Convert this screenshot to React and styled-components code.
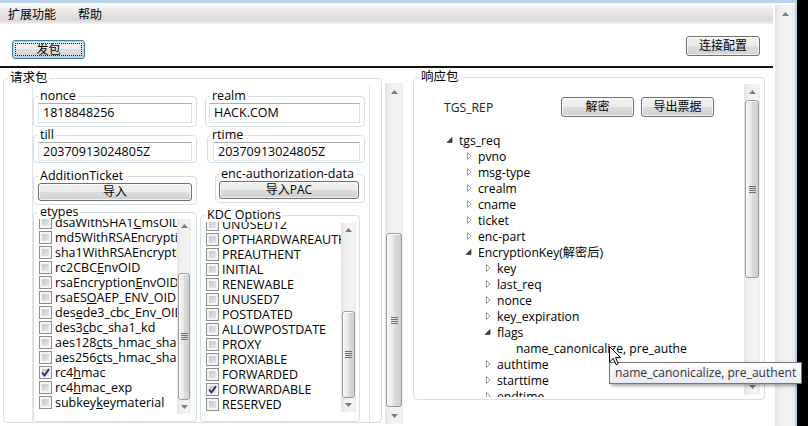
import React from "react";
import styled, { createGlobalStyle } from "styled-components";

const GlobalStyle = createGlobalStyle`
  * { box-sizing: border-box; }
  html, body { margin: 0; padding: 0; background: #000; }
  body {
    font-family: "Open Sans", "Noto Sans CJK SC", sans-serif;
    font-size: 12.5px;
    color: #000;
  }
`;

const Screen = styled.div`
  position: relative;
  width: 808px;
  height: 426px;
  overflow: hidden;
  background: #000;
`;

const Frame = styled.div`
  display: flex;
  width: 797px;
  height: 426px;
  border-top: 3px solid #b9d1ea;
  border-right: 2px solid #b9d1ea;
  background: #fff;
  overflow: hidden;
`;

const Main = styled.div`
  display: flex;
  flex-direction: column;
  flex: none;
  width: 773px;
`;

const MenuBar = styled.div`
  display: flex;
  align-items: center;
  gap: 22px;
  height: 18px;
  margin-top: 3px;
  padding-left: 8px;
  font-size: 12px;
  background: linear-gradient(#f6f6f6 0%, #eae8e8 25%, #dcd9d9 80%, #f4f4f4 100%);
`;

const MenuItem = styled.span`
  line-height: 18px;
`;

const Toolbar = styled.div`
  display: flex;
  justify-content: space-between;
  align-items: flex-start;
  height: 42px;
  padding: 0 13px 0 12px;
`;

const Button = styled.button`
  position: relative;
  flex: none;
  width: ${(p) => p.$w}px;
  height: ${(p) => p.$h}px;
  margin-top: ${(p) => p.$mt || 0}px;
  padding: 0;
  border: 1px solid ${(p) => (p.$focus ? "#3c7fb1" : "#707070")};
  border-radius: 3px;
  background: linear-gradient(#f2f2f2 0%, #ebebeb 50%, #dddddd 50%, #cfcfcf 100%);
  box-shadow: ${(p) =>
    p.$focus
      ? "inset 0 0 0 1px #9fdcf6"
      : "inset 0 0 0 1px rgba(255, 255, 255, 0.75)"};
  font: inherit;
  font-size: 12px;
  color: #000;
  line-height: 1;

  &::after {
    content: "";
    display: ${(p) => (p.$focus ? "block" : "none")};
    position: absolute;
    inset: 2px;
    border: 1px dotted #222;
  }
`;

const Separator = styled.div`
  height: 2px;
  background: #111;
  flex: none;
`;

const Body = styled.div`
  display: flex;
  align-items: flex-start;
  flex: 1;
`;

const Group = styled.fieldset`
  display: flex;
  flex-direction: column;
  flex: ${(p) => (p.$grow ? 1 : "none")};
  min-width: 0;
  width: ${(p) => (p.$w ? `${p.$w}px` : "auto")};
  height: ${(p) => (p.$h ? `${p.$h}px` : "auto")};
  margin: ${(p) => `${p.$mt || 0}px ${p.$mr || 0}px 0 ${p.$ml || 0}px`};
  padding: ${(p) => `0 ${p.$pr ?? 4}px ${p.$pb ?? 3}px ${p.$pl ?? 4}px`};
  border: 1px solid #d5dfe5;
  border-radius: 4px;
  box-shadow: inset 1px 1px 0 #fff;
`;

const Legend = styled.legend`
  margin-left: ${(p) => p.$lm || 0}px;
  padding: 0 2px;
  line-height: 14px;
  white-space: nowrap;
`;

const RequestPanel = styled.div`
  display: flex;
  gap: 3px;
  flex: 1;
  margin: 0 11px 0 28px;
  padding: 4px 4px 0 0;
  border-left: 1px solid #e1e6ea;
  border-right: 1px solid #e1e6ea;
`;

const Column = styled.div`
  display: flex;
  flex-direction: column;
  width: ${(p) => p.$w}px;
  flex: none;
`;

const TextBox = styled.div`
  height: ${(p) => p.$h || 20}px;
  padding-left: 4px;
  border: 1px solid;
  border-color: #abadb3 #dbdfe6 #e3e9ef #e2e3ea;
  line-height: ${(p) => (p.$h || 20) - 2}px;
  white-space: nowrap;
  overflow: hidden;
`;

const List = styled.div`
  display: flex;
  flex: 1;
  margin: ${(p) => p.$m};
  min-height: 0;
`;

const ListViewport = styled.div`
  flex: 1;
  overflow: hidden;
  padding-left: ${(p) => p.$pl}px;
`;

const ListInner = styled.div`
  margin-top: ${(p) => p.$shift}px;
`;

const CheckRow = styled.div`
  display: flex;
  align-items: center;
  gap: 3px;
  height: 15px;
  white-space: nowrap;
`;

const Box = styled.span`
  display: flex;
  align-items: center;
  justify-content: center;
  flex: none;
  width: 13px;
  height: 13px;
  border: 1px solid #8e8f8f;
  background: linear-gradient(135deg, #bcc0c6, #eeeeee);
  box-shadow: inset 0 0 0 2px #f5f5f5;
`;

const Bar = styled.div`
  display: flex;
  flex-direction: column;
  flex: none;
  width: ${(p) => p.$w}px;
  height: ${(p) => (p.$h ? `${p.$h}px` : "auto")};
  margin: ${(p) => p.$m || "0"};
  background: linear-gradient(to right, #e4e4e4, #eeeeee 25%, #f3f3f3 70%, #ededed);
`;

const ArrowCell = styled.div`
  display: flex;
  align-items: center;
  justify-content: center;
  flex: none;
  height: ${(p) => p.$h}px;
`;

const Lane = styled.div`
  display: flex;
  flex-direction: column;
  flex: 1;
  padding: 0 1px;
`;

const Thumb = styled.div`
  display: flex;
  align-items: center;
  justify-content: center;
  flex: none;
  margin-top: ${(p) => p.$top}px;
  height: ${(p) => p.$h}px;
  border: 1px solid #9b9b9b;
  border-radius: 3px;
  background: linear-gradient(to right, #f4f4f4, #e9e9e9 45%, #dadada 55%, #d0d0d0);
  box-shadow: inset 1px 1px 0 #fff;
`;

const ResponseArea = styled.div`
  display: flex;
  align-items: flex-start;
`;

const TreeArea = styled.div`
  width: 330px;
  height: 313px;
  overflow: hidden;
  flex: none;
`;

const Header = styled.div`
  display: flex;
  align-items: center;
  gap: 7px;
  height: 20px;
  margin-top: 13px;
  padding: 0 30px;
`;

const Caption = styled.span`
  flex: 1;
  font-size: 12.2px;
  color: #222;
`;

const Tree = styled.div`
  margin-top: 15px;
  font-size: 12.2px;
`;

const TreeRow = styled.div`
  display: flex;
  align-items: center;
  height: 16px;
  padding-left: ${(p) => 29 + p.$level * 19}px;
  white-space: nowrap;
`;

const Expander = styled.span`
  display: flex;
  flex: none;
  width: 16px;
  height: 16px;
`;

const OuterBar = styled(Bar)`
  margin: 2px 0 0 2px;
`;

const Tooltip = styled.div`
  position: absolute;
  left: 609px;
  top: 362px;
  width: 193px;
  height: 22px;
  padding-left: 5px;
  border: 1px solid #767676;
  background: linear-gradient(#ffffff, #e8e9f2);
  box-shadow: 2px 2px 3px rgba(0, 0, 0, 0.35);
  font-size: 12.1px;
  line-height: 20px;
  color: #333;
  white-space: nowrap;
`;

const Cursor = styled.svg`
  position: absolute;
  left: 609px;
  top: 346px;
`;

const Arrow = ({ down }) => (
  <svg width="7" height="4" viewBox="0 0 7 4">
    <polygon points={down ? "0,0 7,0 3.5,4" : "0,4 7,4 3.5,0"} fill="#7c7c7c" />
  </svg>
);

const Grip = () => (
  <svg width="7" height="7" viewBox="0 0 7 7">
    {[0.5, 2.5, 4.5, 6.5].map((y) => (
      <line key={y} x1="0" y1={y} x2="7" y2={y} stroke="#707070" strokeWidth="1" />
    ))}
  </svg>
);

const ScrollBar = ({ w, h, m, arrow, thumbTop, thumbH }) => (
  <Bar $w={w} $h={h} $m={m}>
    <ArrowCell $h={arrow}>
      <Arrow />
    </ArrowCell>
    <Lane>
      {thumbH ? (
        <Thumb $top={thumbTop} $h={thumbH}>
          <Grip />
        </Thumb>
      ) : null}
    </Lane>
    <ArrowCell $h={arrow}>
      <Arrow down />
    </ArrowCell>
  </Bar>
);

const Check = () => (
  <svg width="9" height="9" viewBox="0 0 9 9">
    <path d="M1 4.5 L3.5 7.5 L8 1" fill="none" stroke="#252a6d" strokeWidth="1.8" />
  </svg>
);

// WPF-style access text: the first "_" marks the underlined letter
const AccessText = ({ text }) => {
  const i = text.indexOf("_");
  if (i < 0) return <span>{text}</span>;
  return (
    <span>
      {text.slice(0, i)}
      <u>{text[i + 1]}</u>
      {text.slice(i + 2)}
    </span>
  );
};

const CheckItem = ({ label, checked }) => (
  <CheckRow>
    <Box>{checked ? <Check /> : null}</Box>
    <AccessText text={label} />
  </CheckRow>
);

const etypes = [
  ["dsaWithSHA1_CmsOID"],
  ["md5WithRSAEncryption"],
  ["sha1WithRSAEncryption"],
  ["rc2CBC_EnvOID"],
  ["rsaEncryption_EnvOID"],
  ["rsaES_OAEP_ENV_OID"],
  ["des_ede3_cbc_Env_OID"],
  ["des3_cbc_sha1_kd"],
  ["aes128_cts_hmac_sha1_96"],
  ["aes256_cts_hmac_sha1_96"],
  ["rc4_hmac", true],
  ["rc4_hmac_exp"],
  ["subkey_keymaterial"],
];

const kdcOptions = [
  ["UNUSED12"],
  ["OPTHARDWAREAUTH"],
  ["PREAUTHENT"],
  ["INITIAL"],
  ["RENEWABLE"],
  ["UNUSED7"],
  ["POSTDATED"],
  ["ALLOWPOSTDATE"],
  ["PROXY"],
  ["PROXIABLE"],
  ["FORWARDED"],
  ["FORWARDABLE", true],
  ["RESERVED"],
];

const tree = [
  [0, "tgs_req", "open"],
  [1, "pvno", "closed"],
  [1, "msg-type", "closed"],
  [1, "crealm", "closed"],
  [1, "cname", "closed"],
  [1, "ticket", "closed"],
  [1, "enc-part", "closed"],
  [1, "EncryptionKey(解密后)", "open"],
  [2, "key", "closed"],
  [2, "last_req", "closed"],
  [2, "nonce", "closed"],
  [2, "key_expiration", "closed"],
  [2, "flags", "open"],
  [3, "name_canonicalize, pre_authe", "leaf"],
  [2, "authtime", "closed"],
  [2, "starttime", "closed"],
  [2, "endtime", "closed"],
];

const ExpanderIcon = ({ state }) => (
  <Expander>
    {state === "closed" ? (
      <svg width="16" height="16" viewBox="0 0 16 16">
        <path d="M5.5 4.5 L5.5 11.5 L9 8 Z" fill="#fff" stroke="#989898" />
      </svg>
    ) : state === "open" ? (
      <svg width="16" height="16" viewBox="0 0 16 16">
        <path d="M9 5.5 L9 10.5 L4 10.5 Z" fill="#3a3a3a" stroke="#262626" strokeWidth="0.6" />
      </svg>
    ) : null}
  </Expander>
);

export default function App() {
  return (
    <Screen>
      <GlobalStyle />
      <Frame>
        <Main>
          <MenuBar>
            <MenuItem>扩展功能</MenuItem>
            <MenuItem>帮助</MenuItem>
          </MenuBar>
          <Toolbar>
            <Button $w={73} $h={19} $mt={16} $focus>
              发包
            </Button>
            <Button $w={74} $h={20} $mt={12}>
              连接配置
            </Button>
          </Toolbar>
          <Separator />
          <Body>
            <Group $w={379} $h={352} $mt={3} $ml={3} $pl={0} $pr={0} $pb={0}>
              <Legend $lm={4}>请求包</Legend>
              <RequestPanel>
                <Column $w={164}>
                  <Group>
                    <Legend>nonce</Legend>
                    <TextBox>1818848256</TextBox>
                  </Group>
                  <Group $mt={1} $pb={1}>
                    <Legend>till</Legend>
                    <TextBox $h={19}>20370913024805Z</TextBox>
                  </Group>
                  <Group $mt={6}>
                    <Legend>AdditionTicket</Legend>
                    <Button $w={154} $h={18}>
                      导入
                    </Button>
                  </Group>
                  <Group $grow $pl={0} $pr={0} $pb={7}>
                    <Legend $lm={4}>etypes</Legend>
                    <List $m="0 5px 0 2px">
                      <ListViewport $pl={3}>
                        <ListInner $shift={-4}>
                          {etypes.map(([l, c]) => (
                            <CheckItem key={l} label={l} checked={c} />
                          ))}
                        </ListInner>
                      </ListViewport>
                      <ScrollBar w={14} arrow={14} thumbTop={40} thumbH={127} />
                    </List>
                  </Group>
                </Column>
                <Column $w={165}>
                  <Group $ml={5} $pl={3}>
                    <Legend $lm={1}>realm</Legend>
                    <TextBox>HACK.COM</TextBox>
                  </Group>
                  <Group $ml={7} $mt={1} $pb={1} $pl={5}>
                    <Legend $lm={-3}>rtime</Legend>
                    <TextBox $h={19}>20370913024805Z</TextBox>
                  </Group>
                  <Group $ml={15} $mt={4} $pl={3} $pr={5}>
                    <Legend>enc-authorization-data</Legend>
                    <Button $w={140} $h={18}>
                      导入PAC
                    </Button>
                  </Group>
                  <Group $grow $mt={5} $mr={5} $pl={0} $pr={0} $pb={9}>
                    <Legend $lm={4}>KDC Options</Legend>
                    <List $m="0 3px 0 0">
                      <ListViewport $pl={5}>
                        <ListInner $shift={-5}>
                          {kdcOptions.map(([l, c]) => (
                            <CheckItem key={l} label={l} checked={c} />
                          ))}
                        </ListInner>
                      </ListViewport>
                      <ScrollBar w={15} arrow={14} thumbTop={74} thumbH={87} m="1px 0 0 0" />
                    </List>
                  </Group>
                </Column>
              </RequestPanel>
            </Group>

            <ScrollBar w={18} h={341} m="15px 0 0 3px" arrow={17} thumbTop={133} thumbH={174} />

            <Group $w={352} $h={330} $mt={2} $ml={10} $pl={0} $pr={0} $pb={0}>
              <Legend $lm={5}>响应包</Legend>
              <ResponseArea>
                <TreeArea>
                  <Header>
                    <Caption>TGS_REP</Caption>
                    <Button $w={73} $h={20}>
                      解密
                    </Button>
                    <Button $w={73} $h={20}>
                      导出票据
                    </Button>
                  </Header>
                  <Tree>
                    {tree.map(([level, label, state]) => (
                      <TreeRow key={label} $level={level}>
                        <ExpanderIcon state={state} />
                        {label}
                      </TreeRow>
                    ))}
                  </Tree>
                </TreeArea>
                <ScrollBar w={16} h={311} arrow={16} thumbTop={0} thumbH={178} />
              </ResponseArea>
            </Group>
          </Body>
        </Main>
        <OuterBar $w={20} $h={421}>
          <ArrowCell $h={18}>
            <Arrow />
          </ArrowCell>
        </OuterBar>
      </Frame>

      <Tooltip>name_canonicalize, pre_authent</Tooltip>
      <Cursor width="13" height="20" viewBox="0 0 13 20">
        <path
          d="M0.5 0.5 L0.5 16 L4.3 12.4 L7 18.6 L9.2 17.6 L6.6 11.6 L11.6 11.6 Z"
          fill="#fff"
          stroke="#000"
          strokeWidth="1"
        />
      </Cursor>
    </Screen>
  );
}
